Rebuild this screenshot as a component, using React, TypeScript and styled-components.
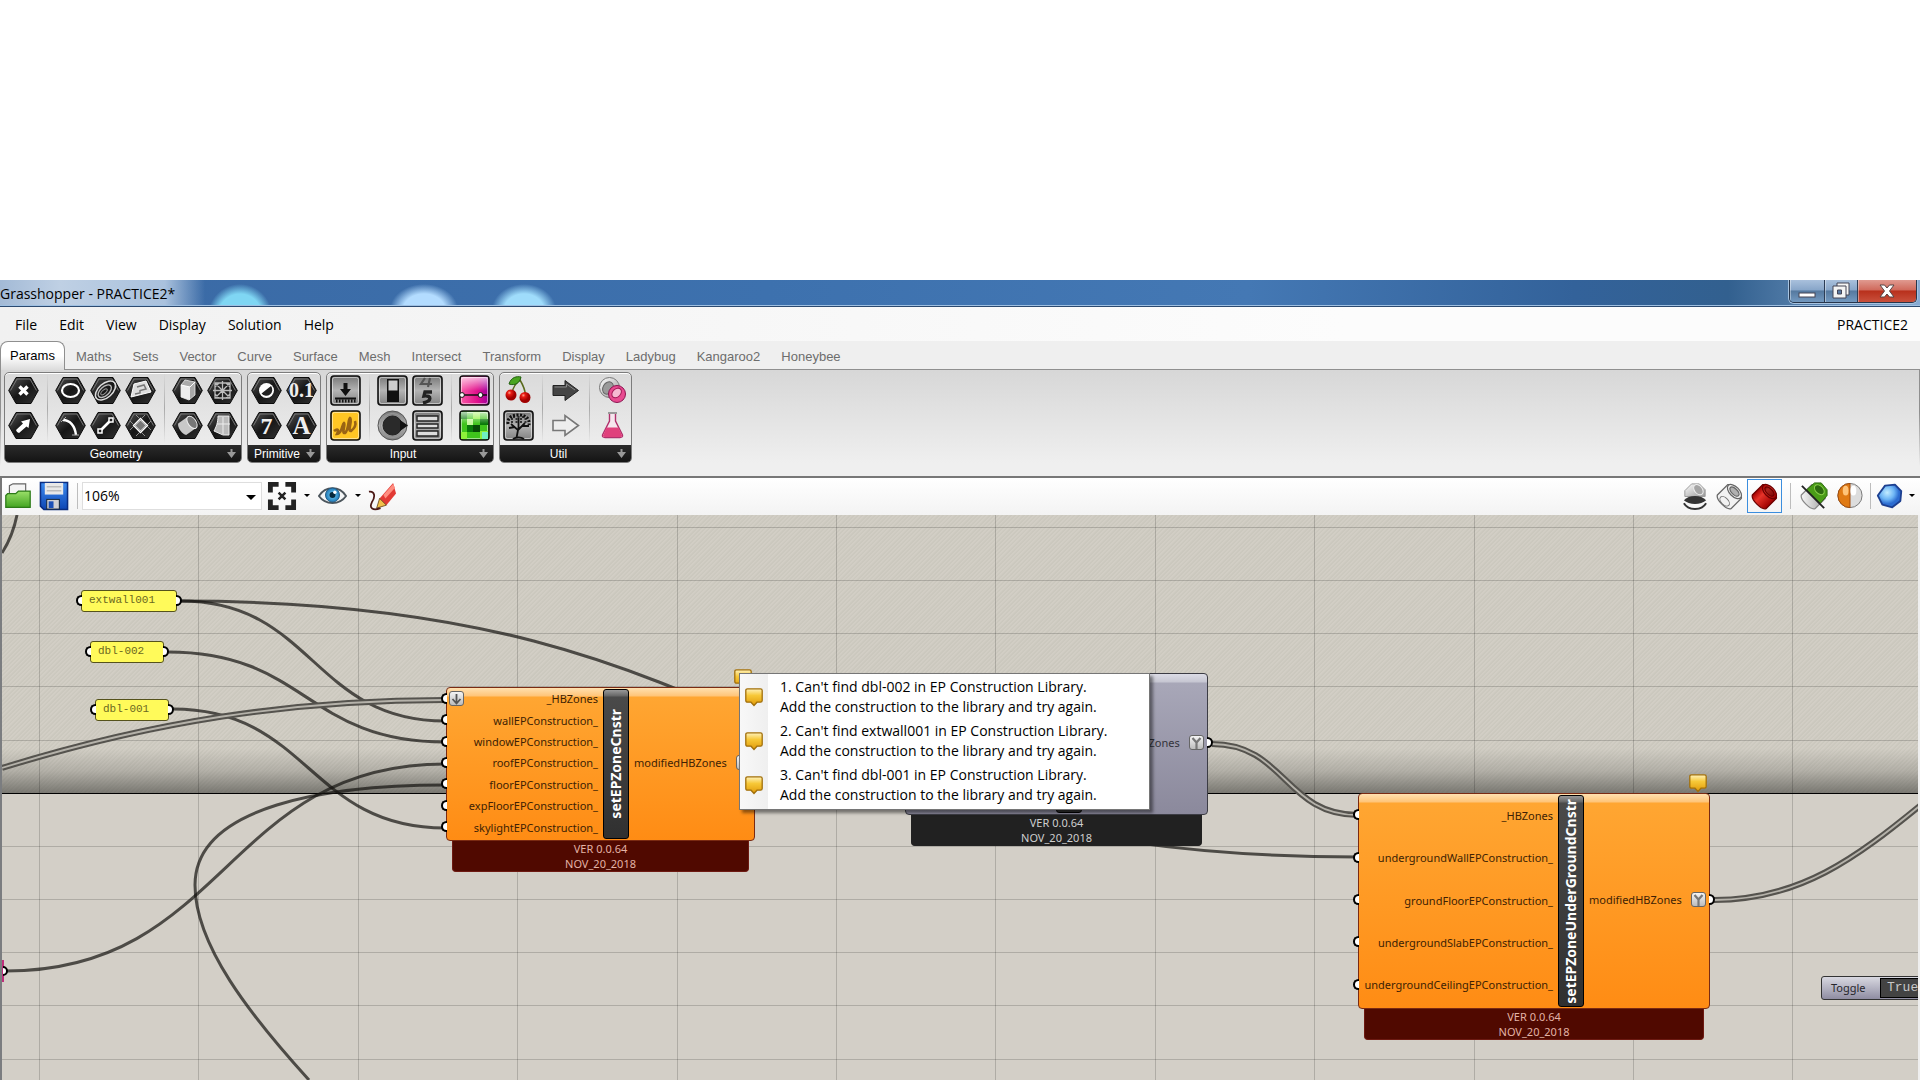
import React from "react";
import styled, { createGlobalStyle, css } from "styled-components";

const ui = '"Open Sans", "Noto Sans", sans-serif';
const classic = '"Liberation Sans", Arial, sans-serif';
const label = '"Noto Sans", "Open Sans", sans-serif';
const mono = '"Liberation Mono", "Courier New", monospace';

const GlobalStyle = createGlobalStyle`
  * { box-sizing: border-box; }
  body { margin: 0; background: #fff; }
  button { font: inherit; color: inherit; background: none; border: 0; padding: 0; }
`;

/* ---------- window ---------- */

const Page = styled.div`
  min-height: 100vh;
  padding-top: 280px;
  display: flex;
  flex-direction: column;
  background: #fff;
  color: #000;
  overflow: hidden;
`;

const Window = styled.div`
  flex: 1;
  display: flex;
  flex-direction: column;
  background: #efefef;
`;

const TitleBar = styled.header`
  height: 27px;
  display: flex;
  justify-content: space-between;
  border-bottom: 1px solid #2c4a70;
  box-shadow: inset 0 -1px 0 #9fc0e2;
  font: 14px/28px ${ui};
  overflow: hidden;
  background:
    radial-gradient(circle at 240px 36px, #7fd6f3 0 22px, transparent 32px),
    radial-gradient(ellipse 34px 26px at 424px 30px, #b3dcff 0 62%, transparent),
    radial-gradient(ellipse 32px 26px at 524px 30px, #9fdcfb 0 62%, transparent),
    linear-gradient(90deg, #a3bad6 0, #bfd0e4 60px, #a9c1dd 165px, transparent 205px),
    linear-gradient(90deg, #3a69a4 0%, #3d71ae 40%, #4478b4 65%, #33629a 82%, #32608f 90%, #88abd2 100%);
`;

const TitleText = styled.span`
  white-space: pre;
`;

const Caption = styled.div`
  display: flex;
  height: 23px;
  margin-right: 3px;
  border: 1px solid #27364c;
  border-top: 0;
  border-radius: 0 0 5px 5px;
  box-shadow: 0 0 0 1px #a7c3e0;
  overflow: hidden;
`;

const CaptionButton = styled.button<{ $w: number; $danger?: boolean }>`
  width: ${(p) => p.$w}px;
  display: flex;
  align-items: center;
  justify-content: center;
  border-left: 1px solid #2b3c55;
  box-shadow: inset 1px 0 0 #ffffff66;
  background: ${(p) =>
    p.$danger
      ? "linear-gradient(#e09a90 0, #d06a5c 45%, #b8301c 50%, #c9503c 100%)"
      : "linear-gradient(#a9c0dc 0, #88a6c9 45%, #55799f 50%, #7399c0 100%)"};
  &:first-child { border-left: 0; }
`;

const MenuBar = styled.nav`
  height: 34px;
  display: flex;
  align-items: center;
  padding: 2px 12px 0 4px;
  background: linear-gradient(90deg, #f1f1f1, #fcfcfc 70%);
  font: 14px/20px ${ui};
`;

const MenuItem = styled.button`
  padding: 0 11px;
`;

const DocName = styled.button`
  margin-left: auto;
`;

/* ---------- ribbon ---------- */

const Tabs = styled.div`
  height: 28px;
  display: flex;
  align-items: stretch;
  gap: 1px;
  font: 13px/31px ${classic};
  color: #6d6d6d;
`;

const Tab = styled.button<{ $active?: boolean }>`
  padding: 0 10px;
  ${(p) =>
    p.$active &&
    css`
      position: relative;
      z-index: 1;
      margin-bottom: -1px;
      padding: 0 8px;
      line-height: 26px;
      width: 65px;
      color: #000;
      border: 1px solid #8f8f8f;
      border-bottom: 0;
      border-radius: 8px 8px 0 0;
      background: linear-gradient(#fff 50%, #dcdcdc);
    `}
`;

const Ribbon = styled.section`
  height: 107px;
  display: flex;
  align-items: flex-start;
  gap: 5px;
  padding: 2px 3px;
  border: 1px solid #8f8f8f;
  border-bottom: 0;
  border-image: linear-gradient(#8f8f8f 40%, #efefef 90%) 1;
  background: linear-gradient(#d7d7d7, #efefef 88%);
`;

const Group = styled.div`
  border: 1px solid #7c7c7c;
  border-radius: 5px;
  background: linear-gradient(#dadada, #f1f1f1);
  box-shadow: inset 0 1px 0 #fff;
  overflow: hidden;
`;

const GroupIcons = styled.div`
  display: flex;
  padding: 0 1px 2px;
`;

const IconPair = styled.div`
  display: grid;
  grid-template-rows: 35px 35px;
  grid-auto-flow: column;
  grid-auto-columns: 35px;
`;

const IconButton = styled.button`
  display: grid;
  place-items: center;
`;

const GroupDivider = styled.i`
  width: 12px;
  background: linear-gradient(transparent, #aaa, transparent) center / 1px 100% no-repeat;
`;

const GroupLabel = styled.div`
  display: grid;
  grid-template-columns: 1fr 14px;
  align-items: center;
  height: 17px;
  background: linear-gradient(#2b2b2b, #141414);
  color: #fff;
  font: 12px/16px ${classic};
  text-align: center;
`;

/* ---------- canvas toolbar ---------- */

const Toolbar = styled.div`
  height: 39px;
  display: flex;
  align-items: center;
  padding: 0 2px 2px 0;
  border-top: 2px solid #777;
  border-left: 2px solid #777;
  background: linear-gradient(#fff, #f3f3f3);
`;

const Tool = styled.button<{ $w?: number; $on?: boolean }>`
  width: ${(p) => p.$w ?? 35}px;
  height: 34px;
  display: grid;
  place-items: center;
  ${(p) => p.$on && css`border: 1px solid #3b8ede;`}
`;

const ToolSet = styled.div`
  display: flex;
  padding: 0 4px 0 2px;
`;

const ToolDivider = styled.i`
  width: 1px;
  height: 26px;
  margin: 0 4px;
  background: #bdbdbd;
`;

const Spacer = styled.div`
  flex: 1;
`;

const ZoomBox = styled.div`
  position: relative;
  width: 180px;
  height: 28px;
  border: 1px solid #dedede;
  background: #fff;
  font: 14px/26px ${ui};
`;

const ZoomSelect = styled.select`
  width: 100%;
  height: 26px;
  padding: 0 1px;
  appearance: none;
  border: 0;
  background: transparent;
  font: inherit;
  color: #000;
`;

const Arrow = styled.i<{ $big?: boolean }>`
  display: block;
  width: 0;
  border: ${(p) => (p.$big ? 5 : 3)}px solid transparent;
  border-top-color: #000;
  border-bottom: 0;
`;

const ZoomArrow = styled(Arrow)`
  position: absolute;
  right: 5px;
  top: 12px;
  pointer-events: none;
`;

/* ---------- canvas ---------- */

const Canvas = styled.main`
  position: relative;
  flex: 1;
  overflow: hidden;
  margin-right: 2px;
  border-left: 2px solid #7b7d80;
  background: #d3cfc7;
`;

const OffPage = styled.div`
  height: 279px;
  border-bottom: 1px solid #000;
  background:
    linear-gradient(transparent 84%, rgba(60, 60, 56, 0.2) 92%, rgba(60, 60, 56, 0.58)),
    repeating-linear-gradient(-45deg, #cbc8be 0 1px, #d2cec5 2px 3px);
`;

const Wires = styled.svg`
  position: absolute;
  inset: 0;
  width: 100%;
  height: 100%;
`;

type Spot = { $x: number; $y: number };
const onCanvas = css<Spot>`
  position: absolute;
  left: ${(p) => p.$x}px;
  top: ${(p) => p.$y}px;
`;

const Port = styled.i<{ $side: "left" | "right" }>`
  position: absolute;
  top: calc(50% - 6px);
  width: 6px;
  height: 11px;
  border: 2px solid #000;
  background: #fff;
  ${(p) =>
    p.$side === "left"
      ? css`right: 100%; border-right: 0; border-radius: 6px 0 0 6px;`
      : css`left: 100%; border-left: 0; border-radius: 0 6px 6px 0;`}
`;

const PanelBox = styled.div<Spot & { $w: number }>`
  ${onCanvas}
  width: ${(p) => p.$w}px;
  height: 22px;
  padding-left: 7px;
  border: 1px solid #55521c;
  border-radius: 3px;
  background: #fffa5a;
  color: #6b681f;
  font: 11px/18px ${mono};
`;

type Tone = "warn" | "idle";

const NodeBox = styled.article<Spot & { $w: number }>`
  ${onCanvas}
  width: ${(p) => p.$w}px;
  font: 11px/15px ${label};
`;

const NodeBody = styled.div<{ $h: number; $tone: Tone }>`
  position: relative;
  height: ${(p) => p.$h}px;
  display: grid;
  grid-template-columns: 1fr 26px 125px;
  border: 1px solid ${(p) => (p.$tone === "warn" ? "#7a2a12" : "#3c3c44")};
  border-radius: 4px;
  color: ${(p) => (p.$tone === "warn" ? "#401f04" : "#33333a")};
  background: ${(p) =>
    p.$tone === "warn"
      ? "linear-gradient(#ffe0b0 0, #ffc478 8px, #ffa632 9px, #ff8c14 100%)"
      : "linear-gradient(#dcdce6 0, #c6c6d2 8px, #a8a7b8 9px, #8b899c 100%)"};
`;

const Inputs = styled.ul`
  display: flex;
  flex-direction: column;
  margin: 0;
  padding: 0 0 2px;
  list-style: none;
`;

const Input = styled.li`
  position: relative;
  flex: 1;
  display: flex;
  align-items: center;
  justify-content: flex-end;
  padding-right: 5px;
`;

const NodeName = styled.div`
  margin: 1px 0;
  display: flex;
  align-items: center;
  justify-content: center;
  border: 1px solid #000;
  border-radius: 3px;
  background: linear-gradient(#999 0, #666 6px, #4a4a4a 7px, #303030 100%);
  color: #fff;
  font: bold 14px/20px ${label};
  white-space: nowrap;
  span {
    writing-mode: vertical-rl;
    transform: rotate(180deg);
  }
`;

const Output = styled.div`
  position: relative;
  display: flex;
  align-items: center;
  justify-content: space-between;
  margin-bottom: 3px;
  padding: 0 3px 0 5px;
`;

const Badge = styled.i`
  width: 15px;
  height: 15px;
  display: grid;
  place-items: center;
  border: 1px solid #666;
  border-radius: 3px;
  background: linear-gradient(#f4f4f4, #bcbcbc);
`;

const InputBadge = styled(Badge)`
  position: absolute;
  left: 2px;
`;

const NodeFooter = styled.footer<{ $tone: Tone }>`
  margin: 0 6px;
  border-radius: 0 0 4px 4px;
  border: 1px solid ${(p) => (p.$tone === "warn" ? "#6d1a12" : "#222")};
  border-top: 0;
  background: ${(p) => (p.$tone === "warn" ? "#500900" : "#212121")};
  color: ${(p) => (p.$tone === "warn" ? "#e3b3a6" : "#cfcfcf")};
  text-align: center;
`;

const BalloonSpot = styled.div<Spot>`
  ${onCanvas}
  line-height: 0;
`;

const ToggleBox = styled.button<Spot>`
  ${onCanvas}
  display: flex;
  align-items: center;
  height: 24px;
  width: 130px;
  padding: 1px;
  border: 1px solid #333;
  border-radius: 3px;
  background: linear-gradient(#d8d8e0 0, #b4b3c2 50%, #8f8da2);
  color: #26262c;
  font: 11px/20px ${label};
`;

const ToggleName = styled.span`
  width: 57px;
  padding-left: 8px;
  text-align: left;
`;

const ToggleValue = styled.span`
  flex: 1;
  padding-left: 6px;
  border: 1px solid #000;
  background: #434343;
  color: #c8c8c8;
  text-align: left;
  font: 13px/18px ${mono};
`;

const Messages = styled.ul<Spot>`
  ${onCanvas}
  width: 411px;
  margin: 0;
  padding: 2px 0 1px;
  list-style: none;
  border: 1px solid #767676;
  background: linear-gradient(90deg, #f8f8f8, #efefef 28px, #fff 28px);
  box-shadow: 3px 3px 3px rgba(0, 0, 0, 0.45);
  font: 14px/20px ${ui};
`;

const Message = styled.li`
  display: grid;
  grid-template-columns: 18px 1fr;
  column-gap: 17px;
  align-items: center;
  padding: 1px 0 3px 5px;
`;

/* ---------- drawings ---------- */

const Defs = () => (
  <svg width="0" height="0" style={{ position: "absolute" }} aria-hidden>
    <defs>
      <linearGradient id="hex" x1="0" y1="0" x2="1" y2="1"><stop offset="0" stopColor="#555" /><stop offset=".5" stopColor="#161616" /><stop offset="1" stopColor="#333" /></linearGradient>
      <linearGradient id="steel" x1="0" y1="0" x2="0" y2="1"><stop offset="0" stopColor="#777" /><stop offset=".5" stopColor="#b4b4b4" /><stop offset="1" stopColor="#808080" /></linearGradient>
      <linearGradient id="gold" x1="0" y1="0" x2="0" y2="1"><stop offset="0" stopColor="#fff3bd" /><stop offset=".4" stopColor="#f7c838" /><stop offset="1" stopColor="#e09a08" /></linearGradient>
      <linearGradient id="pink" x1="0" y1="0" x2="1" y2="0"><stop offset="0" stopColor="#fa5aa6" /><stop offset=".6" stopColor="#e0108c" /><stop offset="1" stopColor="#9c00a0" /></linearGradient>
      <linearGradient id="shine" x1="0" y1="0" x2="0" y2="1"><stop offset="0" stopColor="#fff" stopOpacity=".7" /><stop offset="1" stopColor="#fff" stopOpacity="0" /></linearGradient>
      <linearGradient id="green" x1="0" y1="0" x2="0" y2="1"><stop offset="0" stopColor="#9be06a" /><stop offset="1" stopColor="#44a422" /></linearGradient>
      <linearGradient id="blue" x1="0" y1="0" x2="0" y2="1"><stop offset="0" stopColor="#3d8cf0" /><stop offset="1" stopColor="#0d45b4" /></linearGradient>
      <linearGradient id="red" x1="0" y1="0" x2="0" y2="1"><stop offset="0" stopColor="#a30000" /><stop offset=".35" stopColor="#e8342a" /><stop offset="1" stopColor="#9c0000" /></linearGradient>
      <linearGradient id="grey" x1="0" y1="0" x2="1" y2="1"><stop offset="0" stopColor="#fff" /><stop offset="1" stopColor="#999" /></linearGradient>
      <radialGradient id="cherry" cx=".35" cy=".3"><stop offset="0" stopColor="#ffa08a" /><stop offset=".35" stopColor="#e81c14" /><stop offset="1" stopColor="#a00000" /></radialGradient>
      <radialGradient id="sky" cx=".4" cy=".35"><stop offset="0" stopColor="#c2ecff" /><stop offset=".6" stopColor="#6db5f5" /><stop offset="1" stopColor="#2c6cd0" /></radialGradient>
      <radialGradient id="iris"><stop offset="0" stopColor="#7ad4f8" /><stop offset="1" stopColor="#1d78b8" /></radialGradient>
    </defs>
  </svg>
);

const Svg = ({ s = 31, children }: { s?: number; children: React.ReactNode }) => (
  <svg width={s} height={s} viewBox="0 0 31 31" fill="none" aria-hidden>{children}</svg>
);

const Hex = ({ children }: { children: React.ReactNode }) => (
  <Svg>
    <path d="M8 2.5H23L30.3 15.5L23 28.5H8L.7 15.5Z" fill="url(#hex)" stroke="#0c0c0c" />
    <path d="M2.5 15.5L9 4H22L28.5 15.5" stroke="#777" />
    {children}
  </Svg>
);

const Tile = ({ fill = "url(#steel)", children }: { fill?: string; children: React.ReactNode }) => (
  <Svg>
    <rect x="1" y="1" width="29" height="29" rx="3" fill={fill} stroke="#111" strokeWidth="1.6" />
    <rect x="2.5" y="2.5" width="26" height="26" rx="2" stroke="#fff" strokeOpacity=".5" />
    {children}
  </Svg>
);

const Serif = ({ children, size }: { children: string; size: number }) => (
  <text x="15.5" y={15.5 + size * 0.34} textAnchor="middle" fill="#eee" fontFamily="Liberation Serif" fontWeight="bold" fontSize={size}>{children}</text>
);

const geometry = [
  [<Hex><path d="M11.5 11.5L19.5 19.5M19.5 11.5L11.5 19.5" stroke="#fff" strokeWidth="3.4" /></Hex>,
   <Hex><path d="M9 22L8 20L15 13.5L13 11.5L22 9L20.5 18L18.5 16.5L11 23Z" fill="#fff" /></Hex>],
  [<Hex><ellipse cx="15.5" cy="15.5" rx="8.5" ry="6.5" stroke="#fff" strokeWidth="2.2" /></Hex>,
   <Hex><path d="M8 10C15 10 20 16 21 25" stroke="#fff" strokeWidth="2.4" /><path d="M6 12L11 7M17 25H24" stroke="#aaa" /></Hex>,
   <Hex><g transform="rotate(-42 15.5 15.5)"><ellipse cx="15.5" cy="15.5" rx="12" ry="7" stroke="#ddd" strokeWidth="1.5" /><ellipse cx="14.5" cy="15.5" rx="8" ry="4.4" stroke="#bbb" strokeWidth="1.4" /><ellipse cx="13.5" cy="15.5" rx="4" ry="1.8" stroke="#999" /></g></Hex>,
   <Hex><path d="M10 21L21 10" stroke="#fff" strokeWidth="2.6" /><rect x="8" y="19" width="4" height="4" fill="#222" stroke="#fff" strokeWidth="1.5" /><rect x="19" y="8" width="4" height="4" fill="#222" stroke="#fff" strokeWidth="1.5" /></Hex>,
   <Hex><path d="M9 9L21 6L26 17L6 22Z" fill="#ddd" stroke="#fff" /><path d="M12 12L19 10L21 14L15 15.5V18L10 19" stroke="#777" strokeWidth="1.5" /></Hex>,
   <Hex><path d="M15.5 9L22 15.5L15.5 22L9 15.5Z" fill="#777" stroke="#fff" strokeWidth="2" /><path d="M11 5L26 20M5 11L20 26M20 5L5 20M26 11L11 26" stroke="#aaa" strokeWidth=".8" /></Hex>],
  [<Hex><path d="M9 10L13 5L23 7V20L17 25L9 22Z" fill="#aaa" stroke="#eee" strokeWidth=".8" /><path d="M9 10L18 12V25L9 22Z" fill="#ececec" /><path d="M9 10L18 12L23 7" stroke="#fff" /></Hex>,
   <Hex><g transform="rotate(-35 15.5 15.5)"><path d="M9 8.500H21V22.500H9C6 20 6 11 9 8.500Z" fill="#c8c8c8" /><ellipse cx="21" cy="15.5" rx="4" ry="7" fill="#777" stroke="#eee" /></g></Hex>,
   <Hex><path d="M8 8H23V23H8ZM15.5 6V25M6 15.5H25M8 8L23 23M23 8L8 23M8 12L12 8M19 8L23 12M23 19L19 23M12 23L8 19" stroke="#bbb" strokeWidth="1.3" /></Hex>,
   <Hex><path d="M11 6H22V25H16L7 21C9 17 11 13 11 6Z" fill="#bbb" stroke="#eee" /><path d="M16 7V24M10 14H23" stroke="#eee" /></Hex>],
];

const primitive = [
  [<Hex><circle cx="15.5" cy="15.5" r="7.5" fill="#fff" /><path d="M20 11A6 6 0 0 1 10.5 18.5Z" fill="#222" /></Hex>,
   <Hex><Serif size={24}>7</Serif></Hex>,
   <Hex><Serif size={20}>0.1</Serif></Hex>,
   <Hex><Serif size={25}>A</Serif></Hex>],
];

const input = [
  [<Tile><path d="M13.5 8H17.5V14H21L15.5 21L10 14H13.5Z" fill="#111" /><path d="M5 23.5H26" stroke="#111" strokeWidth="2" /><path d="M6 26H26" stroke="#111" strokeWidth="3" strokeDasharray="1.5 1.5" /></Tile>,
   <Tile fill="#ffc624"><path d="M4 21C8 18 9 20 7 24C12 24 12 14 14 13C16 14 11 24 15 23C19 20 18 9 20 8C23 9 17 22 21 21C25 18 26 14 25 11" stroke="#9a6414" strokeWidth="2.6" /></Tile>],
  [<Tile><rect x="10" y="4" width="12" height="23" fill="#111" /><rect x="11.5" y="5.5" width="9" height="10" fill="#ccc" /></Tile>,
   <Svg><circle cx="15.5" cy="15.5" r="14.5" fill="url(#steel)" stroke="#555" /><circle cx="15.5" cy="15.5" r="9.5" fill="#2a2a2a" stroke="#222" /><circle cx="15.5" cy="15.5" r="12" stroke="#999" /><path d="M23 10L31 15.5L23 21Z" fill="#111" /></Svg>,
   <Tile><path d="M13 3L9 9H20M18 3L16 12" stroke="#555" strokeWidth="2.2" /><path d="M20 17H13L12 21C20 20 20 26 11 28" stroke="#222" strokeWidth="3.4" /></Tile>,
   <Tile><path d="M5 6H26V11H5ZM5 14H26V18H5ZM5 21H26V26H5Z" fill="#ddd" stroke="#222" strokeWidth="1.4" /></Tile>],
  [<Tile fill="url(#pink)"><rect x="2" y="2" width="27" height="14" fill="url(#shine)" /><path d="M3 20H28" stroke="#111" strokeWidth="1.6" /><circle cx="3" cy="20" r="2.4" fill="#fff" stroke="#111" /><circle cx="21.5" cy="20" r="2.4" fill="#fff" stroke="#111" /></Tile>,
   <Tile fill="#3fc41c"><path d="M2 2H8V9H2ZM21 9H29V15H21ZM8 15H15V22H8Z" fill="#0a7a0a" /><path d="M14 2H21V9H14ZM2 22H8V29H2ZM21 21H29V29H21Z" fill="#8df03a" /><path d="M8 9H14V15H8Z" fill="#c4f89a" /><path d="M14 15H21V22H14Z" fill="#064a06" /><path d="M23 22H29V29H23Z" fill="#6ff0c0" /><rect x="2" y="2" width="27" height="12" fill="url(#shine)" /></Tile>],
];

const util = [
  [<Svg><path d="M9 18C10 12 13 8 17 5C20 10 22 14 22.5 20" stroke="#5a6a1c" strokeWidth="1.5" /><path d="M6 9C8 2 14 1 18 2C17 8 12 11 6 9Z" fill="#4aa520" stroke="#226010" /><circle cx="8" cy="20" r="5.5" fill="url(#cherry)" /><circle cx="22" cy="22.5" r="5.5" fill="url(#cherry)" /></Svg>,
   <Tile><path d="M13.5 28L15 20L8 14M15 20L22 13M15.5 20V8M12 17L6 18M19 16L26 16" stroke="#111" strokeWidth="1.8" /><path d="M10 29C13 27 18 27 21 29" stroke="#111" strokeWidth="2" /><path d="M5 14C4 8 9 5 15 5S27 7 26 15" stroke="#111" strokeWidth="3" strokeDasharray="2 1.5" /><path d="M8 9H24M10 7H22M8 12H24" stroke="#111" strokeWidth="1.4" strokeDasharray="2 2.5" /></Tile>],
  [<Svg><path d="M3 10.5H15V5.5L28.5 15.5L15 25.5V20.5H3Z" fill="#444" stroke="#222" /><path d="M4.5 12H16.5V9L25 15" stroke="#888" /></Svg>,
   <Svg><path d="M3 10.5H15V5.5L28.5 15.5L15 25.5V20.5H3Z" fill="#eee" stroke="#777" strokeWidth="1.6" /></Svg>],
  [<Svg><circle cx="12.5" cy="12.5" r="10" fill="url(#grey)" stroke="#777" /><ellipse cx="11" cy="13" rx="5" ry="6.500" fill="#9a9a9a" stroke="#666" transform="rotate(30 11 13)" /><circle cx="20" cy="19" r="8.5" fill="#e84a90" stroke="#8c1450" /><ellipse cx="20.5" cy="18" rx="5.5" ry="4" fill="#f6b8d2" stroke="#a41a58" transform="rotate(-45 20 19)" /></Svg>,
   <Svg><path d="M12.500 3H18.500V11L25.500 25Q26 27.500 23 27.500H8Q5 27.500 5.500 25L12.500 11Z" fill="#f6e6ee" stroke="#b0306c" strokeWidth="1.4" /><path d="M9.5 17.500H21.5L25 25.500Q25 27 23 27H8Q6 27 6 25.500Z" fill="#e0407c" /><path d="M11 3H20" stroke="#999" strokeWidth="2" /></Svg>],
];

const groups: { name: string; columns: React.ReactNode[][] }[] = [
  { name: "Geometry", columns: geometry },
  { name: "Primitive", columns: primitive },
  { name: "Input", columns: input },
  { name: "Util", columns: util },
];

const MorePin = () => (
  <svg width="9" height="11" viewBox="0 0 9 11" fill="#999" aria-hidden><path d="M3.5 1H5.5V4H9L4.5 10L0 4H3.5Z" /></svg>
);

const Balloon = () => (
  <svg width="18" height="19" viewBox="0 0 18 19" aria-hidden>
    <path d="M2.5 .8H15.5Q17.2 .8 17.2 2.5V12.5Q17.2 14.2 15.5 14.2H12L9 17.5L6 14.2H2.5Q.8 14.2 .8 12.5V2.5Q.8 .8 2.5 .8Z" fill="url(#gold)" stroke="#a2700c" strokeWidth="1.3" />
  </svg>
);

const YGlyph = () => (
  <svg width="11" height="12" viewBox="0 0 11 12" fill="none" aria-hidden><path d="M1.5 1L5.5 5.5L9.5 1M5.5 5.5V12" stroke="#777" strokeWidth="2.2" /></svg>
);

const DownGlyph = () => (
  <svg width="11" height="12" viewBox="0 0 11 12" fill="none" aria-hidden><path d="M5.5 1V10M1.5 6L5.5 10.5L9.5 6" stroke="#555" strokeWidth="1.8" /></svg>
);

const Barrel = ({ fill, stroke }: { fill: string; stroke: string }) => (
  <g transform="rotate(-45 15.5 15.5)" stroke={stroke} strokeWidth="1.3">
    <path d="M7 5.500H22C26.5 8 26.5 23 22 25.500H7C2.500 23 2.500 8 7 5.500Z" fill={fill} />
    <ellipse cx="22" cy="15.5" rx="5" ry="9" fill={fill} />
    <ellipse cx="22" cy="15.5" rx="3" ry="6" fill="#0004" />
  </g>
);

/* ---------- data ---------- */

const menus = ["File", "Edit", "View", "Display", "Solution", "Help"];
const tabs = ["Params", "Maths", "Sets", "Vector", "Curve", "Surface", "Mesh", "Intersect", "Transform", "Display", "Ladybug", "Kangaroo2", "Honeybee"];

const single = [
  "M17 515C14 530 9 542 2 553",
  "M181 601C781 601 758 857 1358 857",
  "M181 601C313 601 313 721 445 721",
  "M168 652C306 652 306 742 445 742",
  "M173 709C309 709 309 828 445 828",
  "M6 971C226 971 226 764 445 764",
  "M445 785C330 785 195 805 195 885C195 945 250 1015 309 1080",
];
const double = [
  "M2 768C150 722 290 700 445 700",
  "M1212 744C1285 744 1285 815 1358 815",
  "M1714 900C1800 900 1856 858 1922 804",
];

const panels = [
  { text: "extwall001", x: 79, y: 75, w: 96 },
  { text: "dbl-002", x: 88, y: 126, w: 74 },
  { text: "dbl-001", x: 93, y: 184, w: 74 },
];

const nodes: { name: string; tone: Tone; x: number; y: number; w: number; h: number; first?: boolean; inputs: string[] }[] = [
  {
    name: "setEPZoneCnstr", tone: "warn", x: 444, y: 172, w: 309, h: 154, first: true,
    inputs: ["_HBZones", "wallEPConstruction_", "windowEPConstruction_", "roofEPConstruction_", "floorEPConstruction_", "expFloorEPConstruction_", "skylightEPConstruction_"],
  },
  { name: "", tone: "idle", x: 903, y: 158, w: 303, h: 142, inputs: [] },
  {
    name: "setEPZoneUnderGroundCnstr", tone: "warn", x: 1356, y: 278, w: 352, h: 216,
    inputs: ["_HBZones", "undergroundWallEPConstruction_", "groundFloorEPConstruction_", "undergroundSlabEPConstruction_", "undergroundCeilingEPConstruction_"],
  },
];

const messages = ["dbl-002", "extwall001", "dbl-001"];

export default function App() {
  return (
    <Page>
      <GlobalStyle />
      <Defs />
      <Window>
        <TitleBar>
          <TitleText>Grasshopper - PRACTICE2*</TitleText>
          <Caption>
            <CaptionButton $w={34} aria-label="Minimize">
              <svg width="18" height="16" viewBox="0 0 18 16"><rect x="1" y="10" width="16" height="4" fill="#fff" stroke="#445" /></svg>
            </CaptionButton>
            <CaptionButton $w={33} aria-label="Restore">
              <svg width="18" height="18" viewBox="0 0 18 18" fill="#f4f4f4" stroke="#445"><path d="M5 1H17V13H5Z" /><path d="M1 4H14V16H1Z" /><path d="M5.5 8H9.5V12H5.5Z" fill="#5a7ba3" /></svg>
            </CaptionButton>
            <CaptionButton $w={59} $danger aria-label="Close">
              <svg width="18" height="16" viewBox="0 0 18 16"><path d="M2 2H6.5L9 5L11.5 2H16L11.5 8L16 14H11.5L9 11L6.5 14H2L6.5 8Z" fill="#fff" stroke="#544" /></svg>
            </CaptionButton>
          </Caption>
        </TitleBar>
        <MenuBar>
          {menus.map((m) => <MenuItem key={m}>{m}</MenuItem>)}
          <DocName>PRACTICE2</DocName>
        </MenuBar>
        <Tabs role="tablist">
          {tabs.map((t, i) => <Tab key={t} role="tab" aria-selected={i === 0} $active={i === 0}>{t}</Tab>)}
        </Tabs>
        <Ribbon>
          {groups.map((g) => (
            <Group key={g.name}>
              <GroupIcons>
                {g.columns.map((col, i) => (
                  <React.Fragment key={i}>
                    {i > 0 && <GroupDivider />}
                    <IconPair>
                      {col.map((icon, j) => <IconButton key={j} aria-label={`${g.name} ${i + 1}.${j + 1}`}>{icon}</IconButton>)}
                    </IconPair>
                  </React.Fragment>
                ))}
              </GroupIcons>
              <GroupLabel>{g.name}<MorePin /></GroupLabel>
            </Group>
          ))}
        </Ribbon>

        <Toolbar>
          <Tool $w={32} aria-label="Open">
            <Svg s={28}><path d="M6 14V4L10 2H24V14Z" fill="#f4f4f4" stroke="#666" strokeWidth="1.3" /><path d="M2 15L4 13H13L16 10H29V28H2Z" fill="url(#green)" stroke="#2c7a18" strokeWidth="1.4" /></Svg>
          </Tool>
          <Tool $w={39} aria-label="Save">
            <Svg s={30}><path d="M1.5 1.5H29.5V29.5H5L1.5 26Z" fill="url(#blue)" stroke="#0a2c80" strokeWidth="1.6" /><rect x="6" y="2" width="19" height="12" fill="#e8e8e8" /><path d="M8 6H23M8 10H23" stroke="#bbb" strokeWidth="1.5" /><rect x="8" y="19" width="13" height="10" fill="#cfcfd4" stroke="#123" /><rect x="10" y="21" width="5" height="7" fill="#1a4fb8" /></Svg>
          </Tool>
          <ToolDivider />
          <ZoomBox>
            <ZoomSelect aria-label="Zoom level" defaultValue="106%"><option>106%</option></ZoomSelect>
            <ZoomArrow $big />
          </ZoomBox>
          <Tool $w={40} aria-label="Zoom extents">
            <Svg s={30}><path d="M3.5 12V3.5H12M19 3.5H27.5V12M27.5 19V27.5H19M12 27.5H3.5V19" stroke="#222" strokeWidth="5" /><path d="M12 12L19 19M19 12L12 19" stroke="#222" strokeWidth="2.6" /></Svg>
          </Tool>
          <Tool $w={10} aria-label="Zoom views"><Arrow /></Tool>
          <Tool $w={41} aria-label="Preview">
            <Svg s={29}><path d="M1 16C8 5 23 5 30 16C23 26 8 26 1 16Z" fill="#f4f6f7" stroke="#4c555c" strokeWidth="2" /><circle cx="15.5" cy="15" r="7.5" fill="url(#iris)" stroke="#245a80" /><circle cx="15.5" cy="15" r="3.2" fill="#06283c" /><circle cx="18" cy="12" r="1.8" fill="#fff" /></Svg>
          </Tool>
          <Tool $w={10} aria-label="Preview options"><Arrow /></Tool>
          <Tool $w={38} aria-label="Sketch">
            <Svg s={30}><path d="M13 18L27 2L30 13L20 25Z" fill="#e23a34" /><path d="M17 14.500L27 3L29 7L19 18Z" fill="#ff8d80" /><path d="M13 18L20 25L10 28Z" fill="#f2c04a" stroke="#5a3a10" strokeWidth=".8" /><path d="M14 28C6 31 2 28 5 22C9 16 8 10 2 11" stroke="#4a1814" strokeWidth="1.8" /></Svg>
          </Tool>
          <Spacer />
          <ToolSet>
            <Tool aria-label="No preview">
              <Svg s={30}><path d="M5 10L12 3H20L26 9V16H5Z" fill="url(#grey)" stroke="#999" /><ellipse cx="19" cy="9" rx="4" ry="6" fill="#a4a4a4" stroke="#eee" transform="rotate(-40 19 9)" /><path d="M4 20C9 14 22 14 27 20C22 25 9 25 4 20Z" fill="#333" /><path d="M4 23C9 31 22 31 27 23" stroke="#333" strokeWidth="2" /></Svg>
            </Tool>
            <Tool aria-label="Wireframe preview"><Svg s={30}><Barrel fill="#f2f2f2" stroke="#666" /><ellipse cx="10" cy="21" rx="3.5" ry="6" stroke="#777" transform="rotate(-45 10 21)" /></Svg></Tool>
            <Tool $on aria-label="Shaded preview"><Svg s={30}><Barrel fill="url(#red)" stroke="#6c0000" /></Svg></Tool>
          </ToolSet>
          <ToolDivider />
          <Tool $w={38} aria-label="Selected only">
            <Svg s={30}><Barrel fill="url(#grey)" stroke="#888" /><path d="M8 9L16 2H23L29 9V15L22 23Z" fill="#4a9c18" stroke="#2c6a0c" /><ellipse cx="21" cy="9" rx="4" ry="6" fill="#2d6a10" stroke="#8ad04a" transform="rotate(-45 21 9)" /><path d="M3 5L26 28" stroke="#222" strokeWidth="2" /></Svg>
          </Tool>
          <Tool $w={33} aria-label="Document preview">
            <Svg s={30}><circle cx="15.5" cy="15" r="12.5" fill="#ddd" stroke="#777" /><path d="M15.5 2.5A12.5 12.5 0 0 0 15.5 27.5Z" fill="#e07a14" stroke="#a04a08" /><ellipse cx="19" cy="10" rx="3" ry="5" fill="#fff" /><ellipse cx="11" cy="10" rx="3" ry="5" fill="#ffc47a" /></Svg>
          </Tool>
          <ToolDivider />
          <Tool $w={30} aria-label="Mesh quality">
            <Svg s={28}><path d="M10 4L21 3L28 10L27 21L18 28L7 25L2 15Z" fill="url(#sky)" stroke="#1c3f90" strokeWidth="2" strokeLinejoin="round" /></Svg>
          </Tool>
          <Tool $w={13} aria-label="Mesh quality options"><Arrow /></Tool>
        </Toolbar>

        <Canvas>
          <OffPage />
          <Wires>
            <g transform="translate(-2 -515)" fill="none">
              <g stroke="#000" strokeOpacity=".17">
                {Array.from({ length: 16 }, (_, i) => { const x = Math.round(39 + i * 159.4) + 0.5; return <path key={i} d={`M${x} 515V1600`} />; })}
                {Array.from({ length: 20 }, (_, i) => { const y = Math.round(527 + i * 53.15) + 0.5; return <path key={i} d={`M0 ${y}H2600`} />; })}
              </g>
              <g stroke="#141210" strokeOpacity=".7" strokeWidth="3">
                {single.map((d) => <path key={d} d={d} />)}
              </g>
              {double.map((d) => (
                <g key={d}>
                  <path d={d} stroke="#55534e" strokeWidth="6" />
                  <path d={d} stroke="#b5b2aa" strokeWidth="1.8" />
                </g>
              ))}
              <path d="M3 960V982" stroke="#c0307c" strokeWidth="2" />
              <path d="M3 967A4 4 0 0 1 3 975" fill="#fff" stroke="#000" strokeWidth="2" />
            </g>
          </Wires>

          {panels.map((p) => (
            <PanelBox key={p.text} $x={p.x} $y={p.y} $w={p.w}>
              <Port $side="left" />{p.text}<Port $side="right" />
            </PanelBox>
          ))}

          <BalloonSpot $x={732} $y={154}><Balloon /></BalloonSpot>
          <BalloonSpot $x={1687} $y={259}><Balloon /></BalloonSpot>

          {nodes.map((n) => (
            <NodeBox key={n.x} $x={n.x} $y={n.y} $w={n.w}>
              <NodeBody $h={n.h} $tone={n.tone}>
                <Inputs>
                  {n.inputs.map((t, i) => (
                    <Input key={t}>
                      <Port $side="left" />
                      {n.first && i === 0 && <InputBadge><DownGlyph /></InputBadge>}
                      {t}
                    </Input>
                  ))}
                </Inputs>
                <NodeName><span>{n.name}</span></NodeName>
                <Output>
                  modifiedHBZones
                  <Badge><YGlyph /></Badge>
                  <Port $side="right" />
                </Output>
              </NodeBody>
              <NodeFooter $tone={n.tone}>VER 0.0.64<br />NOV_20_2018</NodeFooter>
            </NodeBox>
          ))}

          <ToggleBox $x={1819} $y={461}>
            <ToggleName>Toggle</ToggleName>
            <ToggleValue>True</ToggleValue>
          </ToggleBox>

          <Messages $x={737} $y={158} role="tooltip">
            {messages.map((m, i) => (
              <Message key={m}>
                <Balloon />
                <span>{i + 1}. Can't find {m} in EP Construction Library.<br />Add the construction to the library and try again.</span>
              </Message>
            ))}
          </Messages>
        </Canvas>
      </Window>
    </Page>
  );
}
